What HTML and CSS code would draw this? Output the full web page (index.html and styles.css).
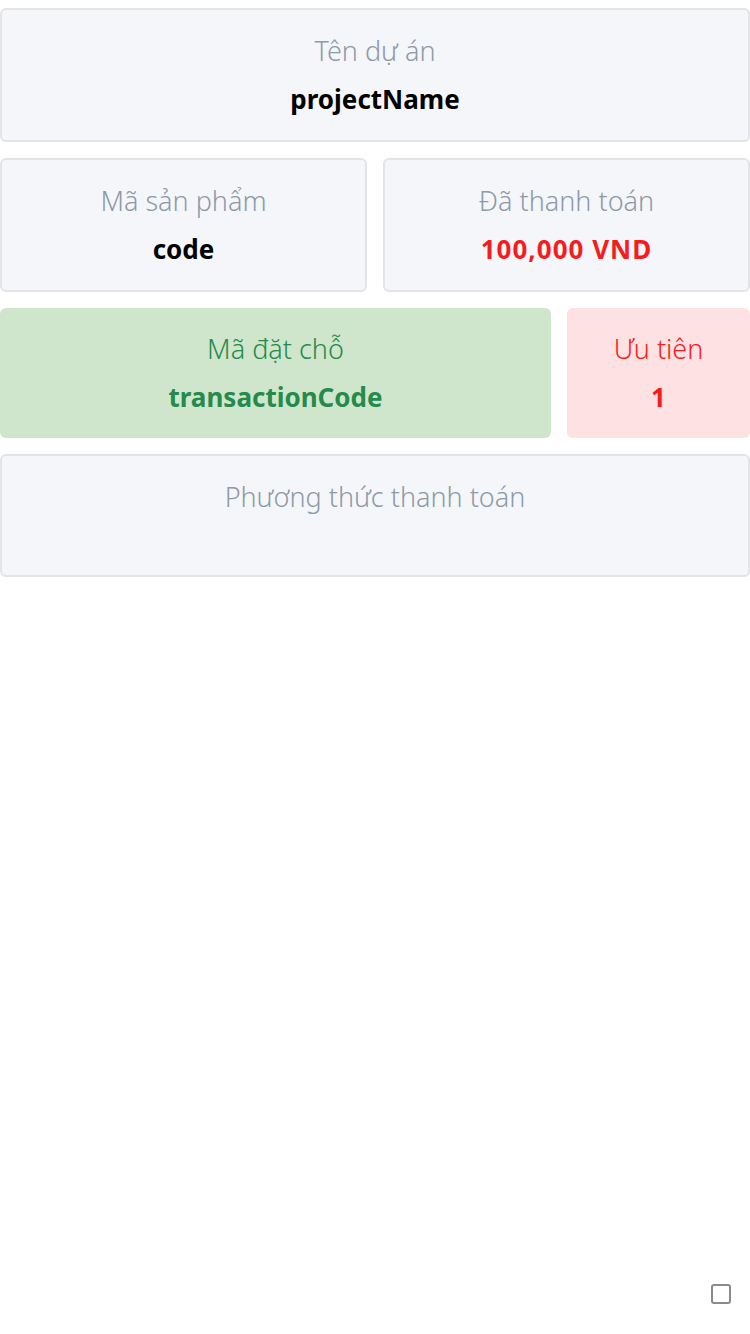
FILE: index.html
```html
<!DOCTYPE html>
<html lang="vi">
<head>
<meta charset="utf-8">
<link rel="stylesheet" href="styles.css">
</head>
<body>
<div class="page">
  <div class="list">
    <div class="card">
      <div class="label">Tên dự án</div>
      <div class="value">projectName</div>
    </div>
    <div class="row">
      <div class="card half">
        <div class="label">Mã sản phẩm</div>
        <div class="value">code</div>
      </div>
      <div class="card half">
        <div class="label">Đã thanh toán</div>
        <div class="value red">100,000 VND</div>
      </div>
    </div>
    <div class="row">
      <div class="card green wide">
        <div class="label">Mã đặt chỗ</div>
        <div class="value">transactionCode</div>
      </div>
      <div class="card pink narrow">
        <div class="label">Ưu tiên</div>
        <div class="value">1</div>
      </div>
    </div>
    <div class="card">
      <div class="label">Phương thức thanh toán</div>
      <div class="value empty"></div>
    </div>
  </div>
  <div class="footer">
    <span class="check"></span>
  </div>
</div>
</body>
</html>
```

FILE: styles.css
```css
* { box-sizing: border-box; }
html, body { margin: 0; padding: 0; background: #fff; }
body { font-family: "Noto Sans", "Open Sans", sans-serif; }
.page {
  min-height: 1334px;
  display: flex;
  flex-direction: column;
  padding-top: 8px;
}
.list {
  display: flex;
  flex-direction: column;
  gap: 16px;
}
.row {
  display: flex;
  gap: 16px;
}
.card {
  background: #f5f6fa;
  border: 2px solid #e3e4e7;
  border-radius: 6px;
  padding: 24px 8px;
  text-align: center;
}
.half { flex: 1 1 0; }
.wide { flex: 0 0 551px; }
.narrow { flex: 1 1 0; }
.label {
  font-size: 27px;
  line-height: 34px;
  color: #8d9aa7;
  font-weight: 300;
}
.value {
  margin-top: 14px;
  font-size: 26px;
  line-height: 34px;
  font-weight: 700;
  color: #000;
}
.value.red { color: #f41c1c; letter-spacing: 1px; }
.value.empty { height: 23px; }
.green {
  background: #d0e6cc;
  border: none;
}
.green .label, .green .value { color: #258a4c; }
.pink {
  background: #fee2e3;
  border: none;
}
.pink .label, .pink .value { color: #fa1c1c; }
.footer {
  margin-top: auto;
  display: flex;
  justify-content: flex-end;
  padding: 0 19px 30px 0;
}
.check {
  width: 20px;
  height: 20px;
  border: 2px solid #8a8a8a;
  border-radius: 3px;
  background: #fff;
}
```
